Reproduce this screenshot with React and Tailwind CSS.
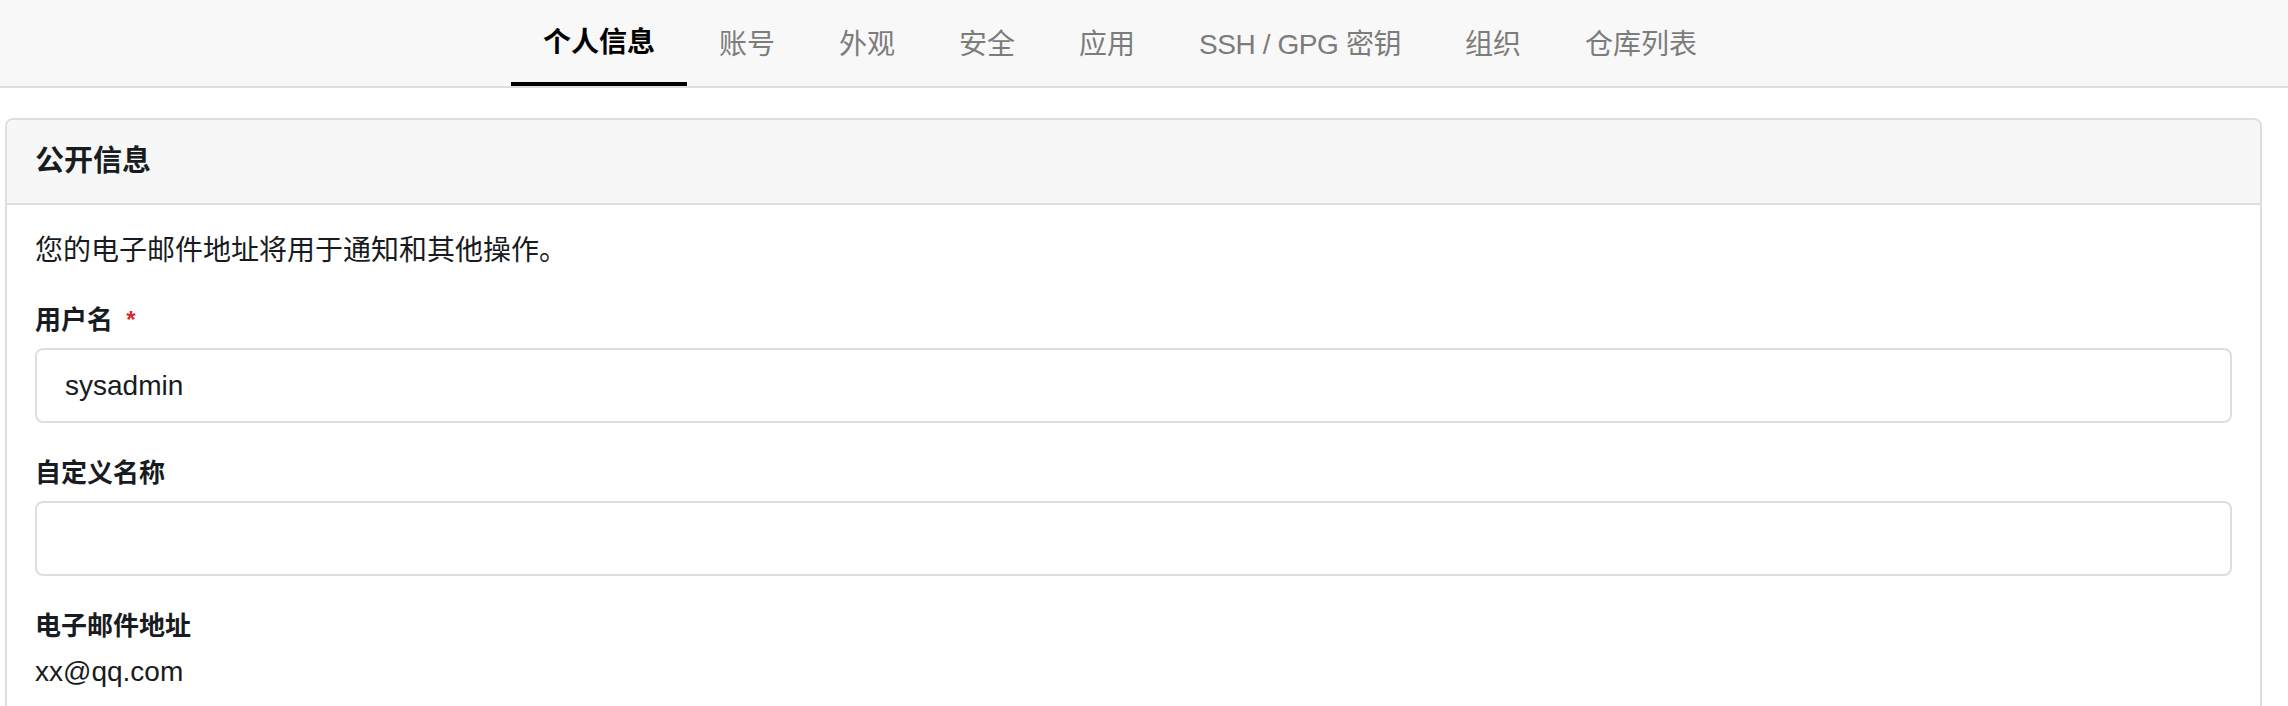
const tabs = ["个人信息", "账号", "外观", "安全", "应用", "SSH / GPG 密钥", "组织", "仓库列表"];

export default function App() {
  return (
    <div
      className="min-h-screen bg-white text-[#181c21]"
      style={{ fontFamily: '"Liberation Sans", "Noto Sans CJK SC", sans-serif' }}
    >
      {/* 顶部导航 */}
      <div className="h-[88px] bg-[#f8f8f8] border-b-2 border-[#dedede] flex justify-center pr-[48px]">
        {tabs.map((t, i) => (
          <div
            key={t}
            className={
              i === 0
                ? "h-[86px] px-[32px] flex items-center border-b-4 border-black pt-[4px] text-[28px] font-semibold text-black"
                : i === 5
                ? "h-[86px] px-[32px] flex items-center pt-[4px] text-[28px] tracking-[-0.4px] text-[#7c7c7c]"
                : "h-[86px] px-[32px] flex items-center pt-[4px] text-[28px] text-[#7c7c7c]"
            }
          >
            {t}
          </div>
        ))}
      </div>

      {/* 公开信息 */}
      <div className="ml-[5px] mr-[26px] mt-[30px] border-2 border-[#dedede] rounded-[8px]">
        <div className="h-[85px] bg-[#f7f7f7] border-b-2 border-[#dedede] rounded-t-[8px] px-[28px] flex items-center">
          <h4 className="text-[29px] font-bold leading-none">公开信息</h4>
        </div>
        <div className="px-[28px] pt-[26px] pb-[28px]">
          <p className="text-[28px] leading-[40px]">您的电子邮件地址将用于通知和其他操作。</p>

          <div className="mt-[31px]">
            <label className="block text-[26px] font-bold leading-[36px] mb-[10px]">
              用户名 <span className="text-[#db2828] ml-[6px] text-[24px] align-top">*</span>
            </label>
            <div className="h-[75px] border-2 border-[#dedede] rounded-[8px] pl-[28px] flex items-center text-[28px]">
              sysadmin
            </div>
          </div>

          <div className="mt-[32px]">
            <label className="block text-[26px] font-bold leading-[36px] mb-[10px]">自定义名称</label>
            <div className="h-[75px] border-2 border-[#dedede] rounded-[8px]"></div>
          </div>

          <div className="mt-[32px]">
            <label className="block text-[26px] font-bold leading-[36px] mb-[8px]">电子邮件地址</label>
            <p className="text-[28px] leading-[40px]">xx@qq.com</p>
          </div>
        </div>
      </div>
    </div>
  );
}
